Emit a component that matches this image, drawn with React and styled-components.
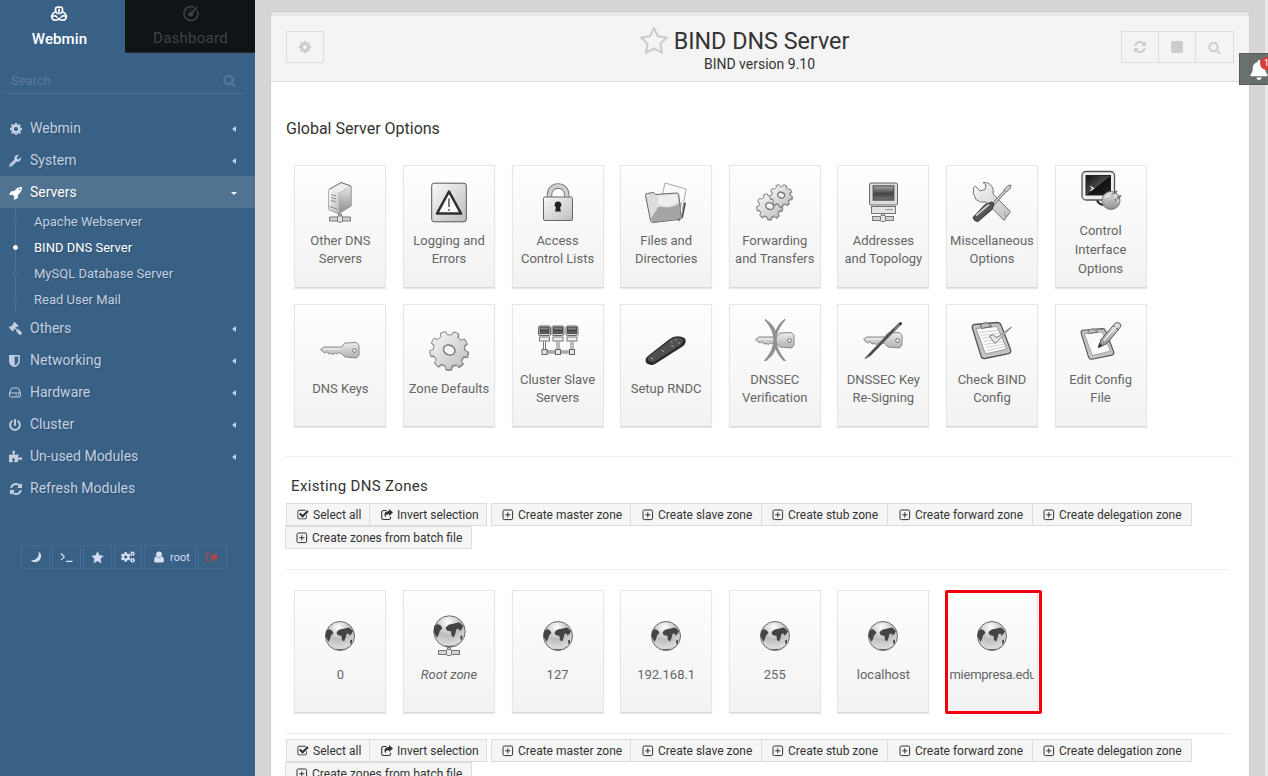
import React from 'react';
import styled, { createGlobalStyle, css } from 'styled-components';
import { FaWrench, FaGavel, FaPowerOff, FaPuzzlePiece, FaCogs, FaBell } from 'react-icons/fa';

const GlobalStyle = createGlobalStyle`
  *, *::before, *::after { box-sizing: border-box; }
  html, body { margin: 0; height: 100%; overflow: hidden; }
  body { background: #d6d6d6; font-family: Roboto, "Liberation Sans", sans-serif; font-size: 13px; color: #333; }
  svg { display: block; }
`;

/* ---------- line icons ---------- */

const Glyph = ({ size = 14, d, box = '0 0 1792 1792' }) => (
  <svg width={size} height={size} viewBox={box} fill="currentColor"><path d={d} /></svg>
);

const COG = 'M1152 896q0-106-75-181t-181-75-181 75-75 181 75 181 181 75 181-75 75-181zm512-109v222q0 12-8 23t-20 13l-185 28q-19 54-39 91 35 50 107 138 10 12 10 25t-9 23q-27 37-99 108t-94 71q-12 0-26-9l-138-108q-44 23-91 38-16 136-29 186-7 28-36 28h-222q-14 0-24.5-8.5t-11.5-21.5l-28-184q-49-16-90-37l-141 107q-10 9-25 9-14 0-25-11-126-114-165-168-7-10-7-23 0-12 8-23 15-21 51-66.5t54-70.5q-27-50-41-99l-183-27q-13-2-21-12.5t-8-23.5v-222q0-12 8-23t19-13l186-28q14-46 39-92-40-57-107-138-10-12-10-24 0-10 9-23 26-36 98.5-107.5t94.5-71.5q13 0 26 10l138 107q44-23 91-38 16-136 29-186 7-28 36-28h222q14 0 24.5 8.5t11.5 21.5l28 184q49 16 90 37l142-107q9-9 24-9 13 0 25 10 129 119 165 170 7 8 7 22 0 12-8 23-15 21-51 66.5t-54 70.5q26 50 41 98l183 28q13 2 21 12.5t8 23.5z';
const REFRESH = 'M1639 1056q0 5-1 7-64 268-268 434.5t-478 166.5q-146 0-282.5-55t-243.5-157l-129 129q-19 19-45 19t-45-19-19-45v-448q0-26 19-45t45-19h448q26 0 45 19t19 45-19 45l-137 137q71 66 161 102t187 36q134 0 250-65t186-179q11-17 53-117 8-23 30-23h192q13 0 22.5 9.5t9.5 22.5zm25-800v448q0 26-19 45t-45 19h-448q-26 0-45-19t-19-45 19-45l138-138q-148-137-349-137-134 0-250 65t-186 179q-11 17-53 117-8 23-30 23h-199q-13 0-22.5-9.5t-9.5-22.5v-7q65-268 270-434.5t480-166.5q146 0 284 55.5t245 156.5l130-129q19-19 45-19t45 19 19 45z';
const SEARCH = 'M1216 832q0-185-131.5-316.5t-316.5-131.5-316.5 131.5-131.5 316.5 131.5 316.5 316.5 131.5 316.5-131.5 131.5-316.5zm512 832q0 52-38 90t-90 38q-54 0-90-38l-343-342q-179 124-399 124-143 0-273.5-55.5t-225-150-150-225-55.5-273.5 55.5-273.5 150-225 225-150 273.5-55.5 273.5 55.5 225 150 150 225 55.5 273.5q0 220-124 399l343 343q37 37 37 90z';
const CHECK = 'M1472 930v318q0 119-84.5 203.5t-203.5 84.5h-832q-119 0-203.5-84.5t-84.5-203.5v-832q0-119 84.5-203.5t203.5-84.5h832q63 0 117 25 15 7 18 23 3 17-9 29l-49 49q-10 10-23 10-3 0-9-2-23-6-45-6h-832q-66 0-113 47t-47 113v832q0 66 47 113t113 47h832q66 0 113-47t47-113v-254q0-13 9-22l64-64q10-10 23-10 6 0 12 3 20 8 20 29zm231-489l-814 814q-24 24-57 24t-57-24l-430-430q-24-24-24-57t24-57l110-110q24-24 57-24t57 24l263 263 647-647q24-24 57-24t57 24l110 110q24 24 24 57t-24 57z';
const ROCKET = 'M1440 448q0-40-28-68t-68-28-68 28-28 68 28 68 68 28 68-28 28-68zm224-288q0 249-75.5 430.5t-253.5 360.5q-81 80-195 176l-20 379q-2 16-16 26l-384 224q-7 4-16 4-12 0-23-9l-64-64q-13-14-8-32l85-276-281-281-276 85q-3 1-9 1-14 0-23-9l-64-64q-17-19-5-39l224-384q10-14 26-16l379-20q96-114 176-195 188-187 358-258t431-71q14 0 24 9.5t10 22.5z';
const STAR = 'M12 1l3.4 7 7.6 1.1-5.5 5.3 1.3 7.6L12 18.4 5.2 22l1.3-7.6L1 9.1 8.6 8z';

const PlusBox = () => (
  <svg width="12" height="12" viewBox="0 0 12 12" fill="none" stroke="currentColor">
    <rect x="1" y="1" width="9.6" height="9.6" rx="1.4" />
    <path d="M5.8 3.2v5.2M3.2 5.8h5.2" />
  </svg>
);
const ShareBox = () => (
  <svg width="12" height="12" viewBox="0 0 12 12">
    <path d="M5.500 1.500H2.500A1.800 1.800 0 0 0 .7 3.300v5.400a1.800 1.800 0 0 0 1.800 1.800h5.200a1.800 1.800 0 0 0 1.800-1.800V7.800" fill="none" stroke="currentColor" strokeWidth="1.100" />
    <path d="M8 0l4 3.500L8 7V5.200C5.400 5.200 4.400 5.800 4.700 8.800 2.300 5.300 3.400 2 8 1.900z" fill="currentColor" />
  </svg>
);
const WebminLogo = () => (
  <svg width="18" height="16" viewBox="0 0 18 16" fill="none" stroke="#fff" strokeWidth="1.700" strokeLinecap="round" strokeLinejoin="round">
    <path d="M5.500 5.800V3.200Q5.700 1.200 7.500 1.200h3q1.800 0 2 2v2.600M9 3.400v4M5.500 5.800Q2.600 7 1.500 10.300L2.300 12.800Q3.200 14.200 5 14L7.500 13.800 9 12.300l1.500 1.500 2.500.2q1.800.2 2.700-1.200l.8-2.500Q15.400 7 12.500 5.800" />
    <path d="M6.200 5.800l1 2M11.800 5.800l-1 2M2 10.300l3.500-.6 1.500 1.500M16 10.300l-3.500-.6-1.500 1.500" strokeWidth="1.400" />
  </svg>
);
const GaugeIcon = () => (
  <svg width="18" height="17" viewBox="0 0 18 17" fill="none" stroke="currentColor">
    <path d="M12 2.200A7 7 0 1 0 15.300 5.500" strokeWidth="1.600" />
    <circle cx="8.800" cy="9.200" r="2" fill="currentColor" />
    <path d="M8.800 9.200L15 2" strokeWidth="1.900" />
    <path d="M4 9h1.200M5.200 5.500l.8.800M8.500 4v1.200" />
  </svg>
);
const HddIcon = () => (
  <svg width="12" height="11" viewBox="0 0 12 11" fill="none" stroke="currentColor">
    <path d="M.6 6L2.300 1.500Q2.500 1 3 1h6q.5 0 .7.500L11.400 6v3q0 1-1 1H1.600q-1 0-1-1V6zM.6 6h10.800M6.500 8H8M9 8h1" />
  </svg>
);
const ShieldIcon = () => (
  <svg width="11" height="12" viewBox="0 0 11 12">
    <path d="M.8.800h9.200v5.400Q10 9.500 5.400 11.400.8 9.500.8 6.200z" fill="none" stroke="currentColor" strokeWidth="1.500" />
    <path d="M.8.800h4.800v10.500Q.8 9.500.8 6.200z" fill="currentColor" />
  </svg>
);
const MoonIcon = () => (
  <svg width="12" height="12" viewBox="0 0 12 12">
    <path d="M8.700.7Q11.500 2.600 11 6t-3.800 4.800Q3.400 12 .8 9.200 5 9.800 7.300 6.800T8.700.7z" fill="currentColor" />
  </svg>
);
const UserIcon = () => (
  <svg width="10" height="12" viewBox="0 0 10 12" fill="currentColor">
    <circle cx="5" cy="3.300" r="2.900" />
    <path d="M2 5.300Q0 6.300 0 9.600 0 11.600 1.700 11.600h6.600Q10 11.600 10 9.600 10 6.300 8 5.300 5 8 2 5.300z" />
  </svg>
);
const TerminalIcon = () => (
  <svg width="13" height="11" viewBox="0 0 13 11" fill="none" stroke="currentColor" strokeWidth="1.200">
    <path d="M1 1.500l3.300 3.300L1 8.100M6 9.400h6.500" />
  </svg>
);
const SignOutIcon = () => (
  <svg width="13" height="11" viewBox="0 0 13 11">
    <path d="M5 1H3Q1 1 1 3v4.500q0 2 2 2h2" fill="none" stroke="currentColor" strokeWidth="1.200" />
    <path d="M4 3.300h3.700V.5L12.700 5.200 7.700 9.900V7.100H4z" fill="currentColor" />
  </svg>
);
const StarIcon = ({ size, outline }) => (
  <svg width={size} height={size} viewBox="0 0 24 24">
    <path d={STAR} fill={outline ? 'none' : 'currentColor'} stroke="currentColor" strokeWidth={outline ? 1.8 : 0.5} />
  </svg>
);

/* ---------- pictograms for the tiles, 48 x 48 ---------- */

const HiddenSvg = styled.svg`position: absolute;`;
const Defs = () => (
  <HiddenSvg width="0" height="0">
    <defs>
      <linearGradient id="light" x1="0" y1="0" x2="1" y2="1"><stop offset="0" stopColor="#fafafa" /><stop offset="1" stopColor="#bcbcbc" /></linearGradient>
      <linearGradient id="mid" x1="0" y1="0" x2="0" y2="1"><stop offset="0" stopColor="#e6e6e6" /><stop offset="1" stopColor="#8c8c8c" /></linearGradient>
      <linearGradient id="pale" x1="0" y1="0" x2="0" y2="1"><stop offset="0" stopColor="#eee" /><stop offset="1" stopColor="#b0b0b0" /></linearGradient>
      <linearGradient id="dark" x1="0" y1="0" x2="0" y2="1"><stop offset="0" stopColor="#aaa" /><stop offset=".55" stopColor="#444" /><stop offset="1" stopColor="#777" /></linearGradient>
      <linearGradient id="night" x1="0" y1="0" x2="1" y2="1"><stop offset="0" stopColor="#111" /><stop offset=".5" stopColor="#4a4a4a" /><stop offset=".52" stopColor="#111" /><stop offset="1" stopColor="#222" /></linearGradient>
      <radialGradient id="ball" cx=".45" cy=".2" r=".85"><stop offset="0" stopColor="#fff" /><stop offset=".5" stopColor="#bdbdbd" /><stop offset=".85" stopColor="#dcdcdc" /><stop offset="1" stopColor="#888" /></radialGradient>
    </defs>
  </HiddenSvg>
);

const Net = ({ y }) => (
  <g fill="#d2d2d2" stroke="#777" strokeWidth="1">
    <path d={`M22.500 ${y - 3}h3v3h-3z`} />
    <rect x="13.500" y={y} width="21" height="4" />
    <rect x="21.500" y={y - 1} width="5" height="6" rx="1" fill="#e6e6e6" />
  </g>
);
const gearPath = (cx, cy, R, r, n) => {
  const pts = [];
  for (let i = 0; i < n; i += 1) {
    [[-0.3, r], [-0.2, R], [0.2, R], [0.3, r]].forEach(([o, rad]) => {
      const a = ((i + o) / n) * Math.PI * 2 + 0.2;
      pts.push(`${(cx + rad * Math.cos(a)).toFixed(2)} ${(cy + rad * Math.sin(a)).toFixed(2)}`);
    });
  }
  return `M${pts.join('L')}Z`;
};
const Gear = ({ cx, cy, R, n = 9 }) => (
  <g stroke="#888" strokeWidth="1" strokeLinejoin="round">
    <path d={gearPath(cx + 0.4, cy + 0.7, R, R * 0.82, n)} fill="#888" />
    <path d={gearPath(cx, cy, R, R * 0.82, n)} fill="url(#light)" />
    <ellipse cx={cx} cy={cy - 0.5} rx={R * 0.31} ry={R * 0.25} transform={`rotate(25 ${cx} ${cy})`} fill="#f7f7f7" stroke="#777" strokeWidth="1.400" />
  </g>
);
const Key = ({ y = 25 }) => (
  <g transform={`translate(0 ${y - 25})`} stroke="#888" strokeLinejoin="round">
    <path d="M4.500 24L8 21.500h17.500l3.500-4L40.500 17l2.500 3v9.500l-2.500 3L29 31.500l-3.500-3.500-2.500-1-1.500 1.500-2-1-2 1.500-2.500-1-2 .5-2-2.500-1.500 1.500-2-1z" fill="url(#pale)" />
    <path d="M7 23.500h18" stroke="#f5f5f5" />
    <circle cx="38.500" cy="25" r="1.800" fill="#fff" stroke="#666" />
  </g>
);
const Monitor = ({ x, y, w, h }) => (
  <g>
    <rect x={x} y={y} width={w} height={h} rx="1.500" fill="#ddd" stroke="#666" />
    <rect x={x + w * 0.13} y={y + h * 0.13} width={w * 0.74} height={h * 0.65} fill="url(#dark)" stroke="#444" />
  </g>
);
const Board = ({ check }) => (
  <g strokeLinejoin="round">
    <path d="M4.500 12q-1-3 1.500-4l23-2q3 0 4 2.500L42.500 33q1 3-2 4.200L17 42q-3 .5-4-2.500z" fill="#c4c4c4" stroke="#555" strokeWidth="1.300" />
    <path d="M8 12l21-2 10 22.500-21.500 5z" fill="#fbfbfb" stroke="#999" />
    {check && <path d="M11.500 16l18-2M12.500 19l18-2M14 22l18-2.500M15.500 25l17.500-3M16.500 28l18-3M18 31l18-3.500M19 34l18-4" stroke="#bbb" strokeWidth=".7" />}
    <path d="M12.500 10.500Q12 7.500 16 6.500q5-1 6 2l2 1.500-10.500 2z" fill="#bbb" stroke="#666" />
  </g>
);
const Land = () => (
  <g fill="#444">
    <path d="M10 20l3-2.500 3 1.500 1.500 2.500-2.500 2.500-1 3.500-1.500 3-1.500-3-1.500-3z" />
    <path d="M20.500 21q2-3.500 6-3.500l6.500-1.500 4 3.500-1.500 3-2 1.500-1-2-2 .5-1 4-1.500 3.500-2-1.500-.5-4-4-1z" />
    <path d="M34 29l2-1v3l-1.500 2zM20 37.500q4 .8 8 0l-2 1h-4z" />
  </g>
);

const PICTURES = {
  server: (
    <g strokeLinejoin="round">
      <path d="M13 12L25 5l10 3.500v20L22.500 36 13 32z" fill="#ededed" stroke="#666" />
      <path d="M13 12l10 3.500V36l-10-4z" fill="url(#light)" />
      <path d="M23 15.500L35 8.500v20L23 36z" fill="url(#mid)" stroke="#aaa" strokeWidth=".6" />
      <path d="M15 17l5 1.500M15 20l5 1.500M15 23l5 1.500M14 29l8 3" stroke="#888" />
      <Net y={39.5} />
    </g>
  ),
  warning: (
    <g>
      <rect x="6.700" y="5.700" width="34.600" height="38.600" rx="2.500" fill="url(#light)" stroke="#555" />
      <path d="M24 14L36 36H12z" fill="#fbfbfb" stroke="#303030" strokeWidth="2.600" strokeLinejoin="round" />
      <path d="M24 21v8.500M24 31.500v1.800" stroke="#333" strokeWidth="1.300" />
    </g>
  ),
  lock: (
    <g>
      <path d="M15.500 20v-3a8.600 8.600 0 0 1 17.200 0V20" fill="none" stroke="#777" strokeWidth="5.500" />
      <path d="M15.500 20v-3a8.600 8.600 0 0 1 17.200 0V20" fill="none" stroke="#cfcfcf" strokeWidth="3.700" />
      <rect x="9.500" y="19.500" width="29" height="23.500" rx="1.500" fill="url(#light)" stroke="#666" />
      <path d="M10.500 25h27M10.500 29h27M10.500 33h27M10.500 37h27" stroke="#ddd" opacity=".5" />
      <path d="M24 24a3.300 3.300 0 0 1 2 6l1 4h-6l1-4a3.300 3.300 0 0 1 2-6z" fill="#222" />
    </g>
  ),
  folder: (
    <g strokeLinejoin="round">
      <path d="M40 26l4-1-3 15-5 4z" fill="#444" />
      <path d="M23 5.500l21 6-5 30-23-5z" fill="#fafafa" stroke="#aaa" />
      <path d="M3.500 18q0-2 2-2l6-1 2 2 21-1.500q2 0 2.300 2L39 39l-2 3-26 3q-2 0-2.500-2z" fill="#dcdcdc" stroke="#666" />
      <path d="M9 41l9-14q9 7 22-3l-2 17-27 4z" fill="#8d8d8d" opacity=".7" />
      <path d="M16 18l19-1 1 7q-9 7-20 5z" fill="#f4f4f4" opacity=".7" />
    </g>
  ),
  gears: <g><Gear cx={18.5} cy={29} R={13} /><Gear cx={30} cy={18} R={11.2} /></g>,
  computer: (
    <g>
      <Monitor x={10.5} y={5.5} w={28} h={22} />
      <rect x="12.500" y="29" width="24" height="7" fill="#e4e4e4" stroke="#777" />
      <path d="M26 32h8" stroke="#999" />
      <Net y={39} />
    </g>
  ),
  tools: (
    <g strokeLinejoin="round">
      <path d="M5.500 10l2-1.500L12 13.500l5-1.500 1-4.500-3-2.500q6-.5 9 4 2 3 1 7.500L42.500 34 36 43 18 24.500q-6 1.500-10-2.500Q4 16 5.500 10z" fill="url(#light)" stroke="#777" />
      <path d="M37 35v4" stroke="#999" />
      <path d="M24 28l15-16.500" stroke="#666" strokeWidth="3" />
      <path d="M24 28l15-16.500" stroke="#ddd" strokeWidth="1.200" />
      <path d="M36 12l4-4 3-.5-.5 3-4 4z" fill="#ccc" stroke="#777" />
      <path d="M5 40l12-13 7-2.500 2 2-2 5.500L10 44q-4 0-5-4z" fill="#555" stroke="#333" />
      <path d="M8 38l13-11" stroke="#ccc" strokeWidth="1.800" />
    </g>
  ),
  console: (
    <g>
      <rect x="5" y="5" width="32.500" height="28.500" rx="4" fill="#eee" stroke="#555" strokeWidth="1.300" />
      <rect x="9" y="9" width="24.500" height="19.500" fill="url(#night)" stroke="#222" />
      <path d="M13.500 20l3 2-3 2" fill="none" stroke="#eee" strokeWidth="1.300" />
      <path d="M20 34q3 6 12 4" fill="none" stroke="#222" strokeWidth="2" />
      <circle cx="34" cy="34" r="9" fill="url(#mid)" stroke="#777" />
      <path d="M34 29.500l6-5M38 34l6-5" stroke="#777" strokeWidth="2.200" />
      <path d="M27 31l10-3 5 8" fill="none" stroke="#eee" />
    </g>
  ),
  key: <Key />,
  gear: <Gear cx={24} cy={25} R={19.3} />,
  cluster: (
    <g>
      {[4.5, 18, 32].map((x) => (
        <g key={x}>
          <Monitor x={x} y={9.5} w={12} h={9.5} />
          <rect x={x + 1} y="20.500" width="10" height="4" fill="#eee" stroke="#777" />
          <path d={`M${x + 6} 25v9`} stroke="#777" strokeWidth="3" />
          <path d={`M${x + 6} 25v9`} stroke="#fff" />
        </g>
      ))}
      <path d="M10 35.500h28" stroke="#777" strokeWidth="3" /><path d="M10 35.500h28" stroke="#ddd" />
      {[8, 21.5, 35.5].map((x) => <rect key={x} x={x} y="33" width="5" height="5" fill="#e6e6e6" stroke="#666" />)}
    </g>
  ),
  remote: (
    <g>
      <path d="M3.500 35q0-3 3-5L27 14q5-4 11-3 7 1 5.500 6-.5 2-3 4L13 38.500q-3 2-7 0-2.500-1-2.500-3.500z" fill="#2b2b2b" />
      <path d="M5.500 33.500q0-2 3-4l20-15q5-3.500 10-2 4 1.500 2 4.500l-3 3-24 15.500q-3 2-6.500 0z" fill="#505050" />
      <path d="M29 16l1.500 1M33 14l1.500 1M36.500 17l1.500 1M29 20l3 1M20 25l2 1M9 32.500l2 1" stroke="#999" strokeWidth="1.200" />
    </g>
  ),
  verify: (
    <g>
      <Key y={24} />
      <path d="M14 3q18 20 0 41h1q9-7 9.500-14Q26 37 33 44h1q-18-21 0-41-7 5-9.500 13Q23 9 14 3z" fill="#929292" stroke="#909090" strokeWidth="1.200" />
    </g>
  ),
  resign: (
    <g>
      <Key y={24} />
      <path d="M8 39.500L39 7.500q3-1.500 2.500 1L11 39.500 6 42z" fill="#777" stroke="#555" strokeWidth=".8" />
      <path d="M10 39L35 12.500" stroke="#444" strokeWidth="1.600" /><circle cx="41.500" cy="7" r="1.500" fill="#333" />
    </g>
  ),
  check: (
    <g>
      <Board check />
      <path d="M21.500 19.500l3.500-1.500 3.500 3.500L43.500 10.500 27 27z" fill="#e8e8e8" stroke="#777" />
    </g>
  ),
  edit: (
    <g>
      <g transform="translate(.5 7) scale(.85)"><Board /></g>
      <path d="M21.500 31l2.500-8L38 7q2-2 5 0 2 2 0 4L30 27z" fill="url(#mid)" stroke="#555" />
      <path d="M21.500 31l1-4 2.500 2zM36 9l5 4" fill="#222" stroke="#444" />
      <path d="M27 24L39 10" stroke="#eee" strokeWidth="1.200" />
    </g>
  ),
  globe: <g><circle cx="24" cy="24.500" r="14.500" fill="url(#ball)" stroke="#6a6a6a" /><Land /></g>,
  globeNet: (
    <g>
      <Net y={39} />
      <circle cx="24.500" cy="20" r="15.700" fill="url(#ball)" stroke="#6a6a6a" />
      <g transform="translate(-1.500 -6.500) scale(1.080)"><Land /></g>
    </g>
  ),
};
const Picture = ({ name }) => <svg width="48" height="48" viewBox="0 .5 48 48" fill="none">{PICTURES[name]}</svg>;

/* ---------- sidebar ---------- */

const Page = styled.div`display: flex; height: 776px; width: 1268px; overflow: hidden;`;
const Sidebar = styled.aside`width: 255px; flex: none; background: #396186; color: #c3cfe0;`;
const Tabs = styled.div`display: flex; height: 53px;`;
const Tab = styled.div`
  display: flex; flex-direction: column; align-items: center;
  width: ${(p) => (p.$active ? 125 : 130)}px; padding-top: 6px; gap: 8px;
  font-size: 15px; line-height: 18px; font-weight: ${(p) => (p.$active ? 500 : 400)};
  letter-spacing: ${(p) => (p.$active ? 0.1 : 0.25)}px;
  color: ${(p) => (p.$active ? '#fff' : '#3f4344')};
  background: ${(p) => (p.$active ? 'transparent' : '#0f1416')};
  ${(p) => !p.$active && css`border-bottom: 1px solid #2a2a2a; padding-top: 5px; gap: 7px;`}
  & > span { margin-left: ${(p) => (p.$active ? -6 : 1)}px; }
  & > svg { margin-left: ${(p) => (p.$active ? -7 : 2)}px; }
`;
const Search = styled.div`
  display: flex; align-items: center; justify-content: space-between;
  width: 240px; height: 27px; margin: 14px 0 18px 5px; padding: 0 9px 0 6px;
  border-bottom: 1px solid #49729a; color: #5a7ba0; font-size: 13px;
`;
const MenuItem = styled.div`
  display: flex; align-items: center; height: 32px; padding: 0 18px 0 9px; font-size: 14px;
  text-shadow: 1px 1px 1px rgba(0, 0, 0, .2);
  color: ${(p) => (p.$open ? '#fff' : '#c3cfe0')};
  background: ${(p) => (p.$open ? '#4f7391' : 'transparent')};
`;
const MenuIcon = styled.span`
  width: 21px; display: flex; padding-top: 1px;
  ${(p) => p.$flip && css`& > svg { transform: scaleX(-1); }`}
`;
const MenuLabel = styled.span`flex: 1;`;
const Caret = styled.i`
  border: 3.5px solid transparent; margin-top: 2px;
  ${(p) => (p.$open
    ? css`border-top-color: #fff; border-bottom: 0;`
    : css`border-right: 4px solid currentColor; border-left: 0; margin-right: 1px;`)}
`;
const SubMenu = styled.div`margin-left: 15px; border-left: 1px solid #4f7391;`;
const SubItem = styled.div`
  display: flex; align-items: center; gap: 16px; height: 26px; font-size: 13px; margin-left: -3px;
  color: ${(p) => (p.$active ? '#fff' : '#c3cfe0')};
  text-shadow: 1px 1px 1px rgba(0, 0, 0, .2);
  &::before {
    content: ''; width: 5px; height: 5px; border-radius: 50%; margin-top: 1px;
    border: 1px solid ${(p) => (p.$active ? '#fff' : '#4f7391')};
    background: ${(p) => (p.$active ? '#fff' : '#396186')};
  }
`;
const Tools = styled.div`display: flex; gap: 2px; margin: 41px 0 0 21px;`;
const ToolButton = styled.div`
  display: flex; align-items: center; justify-content: center; gap: 6px;
  width: ${(p) => p.$width || 29}px; height: 24px; border: 1px solid #426d97; padding-left: ${(p) => p.$shift || 0}px;
  font-size: 11px; color: ${(p) => (p.$danger ? '#a94a4a' : '#d4def0')};
`;

/* ---------- content ---------- */

const Main = styled.main`width: 978px; flex: none; margin: 12px 0 0 16px; background: #fff; border-top: 4px solid #e6e6e6; box-shadow: 0 0 1px #aaa;`;
const Header = styled.header`
  display: flex; justify-content: space-between; height: 66px; padding: 15px;
  background: #f4f4f4; border-bottom: 1px solid #ddd;
`;
const HeaderGroup = styled.div`display: flex; width: 113px; height: 32px; justify-content: ${(p) => (p.$end ? 'flex-end' : 'flex-start')};`;
const HeaderButton = styled.div`
  display: flex; align-items: center; justify-content: center; width: 38px; height: 32px; flex: none;
  border: 1px solid #ddd; color: #ccc;
  & + & { margin-left: -1px; }
  & + &:last-child { width: 39px; }
`;
const StopSquare = styled.span`width: 12px; height: 12px; border-radius: 2px; background: #ccc;`;
const Heading = styled.div`display: flex; flex-direction: column; align-items: center; margin: -4px 1px 0 0; line-height: 16px; font-size: 14px;`;
const Title = styled.h1`
  display: flex; align-items: center; gap: 6px; margin: 0 0 1px -30px; font-weight: 400; font-size: 23.3px; line-height: 28px; color: #333;
  & > svg { color: #ccc; }
`;
const Body = styled.div`padding: 0 15px;`;
const SectionTitle = styled.h2`
  margin: 0; font-weight: 400; line-height: 20px; color: #333;
  ${(p) => (p.$sub
    ? css`font-size: 15px; letter-spacing: .35px; padding: 19px 0 7px 5px;`
    : css`font-size: 16px; padding: 37px 0 26px;`)}
`;
const Tiles = styled.div`
  display: grid; grid-template-columns: repeat(8, 108.6px); row-gap: 16px; padding-left: 8.4px;
`;
const Tile = styled.div`
  display: flex; flex-direction: column; align-items: center; justify-content: center; gap: 6px;
  width: 92px; height: 123px; padding-bottom: 8px; position: relative;
  border: 1px solid #e6e6e6; border-bottom-color: #d9d9d9; box-shadow: 0 1px 1px #e8e8e8;
  background: linear-gradient(#fefefe, #f2f2f2);
  ${(p) => p.$marked && css`
    &::after { content: ''; position: absolute; left: -2px; top: -1px; width: 97px; height: 124px; border: 3px solid #f2000c; border-radius: 2px; }
  `}
`;
const TileLabel = styled.div`
  width: ${(p) => (p.$clipped ? 85 : 90)}px; color: #666; font-size: 13px; line-height: ${(p) => (p.$tall ? 19 : 18)}px;
  font-style: ${(p) => (p.$italic ? 'italic' : 'normal')}; white-space: pre; overflow: hidden;
  text-align: ${(p) => (p.$clipped ? 'left' : 'center')};
  letter-spacing: ${(p) => (p.$clipped ? -0.25 : 0)}px;
`;
const Rule = styled.hr`border: 0; border-top: 1px solid #eee; height: 0; margin: ${(p) => p.$margin}; width: ${(p) => p.$width || 948}px;`;
const ActionRow = styled.div`display: flex; height: 23px;`;
const Action = styled.div`
  display: flex; align-items: center; gap: 4px; flex: none; width: ${(p) => p.$width}px; height: 23px; padding-left: ${(p) => p.$pad || 10}px;
  margin-left: ${(p) => p.$offset || 0}px; border: 1px solid #ddd; background: #f5f5f5; color: #333; font-size: 12px; white-space: nowrap;
`;
const Bell = styled.div`
  position: absolute; left: 1239px; top: 53px; width: 40px; height: 32px; padding: 6px 0 0 9px;
  background: rgba(88, 94, 94, .88); border: 1px solid #5a5a5a; color: #fff;
`;
const Badge = styled.span`
  position: absolute; left: 20px; top: 3px; width: 13px; height: 13px; border-radius: 50%;
  background: #d9403c; color: #fff; font-size: 9px; line-height: 13px; padding-left: 4px;
`;
const Clip = styled.div`position: relative; width: 1268px; height: 776px; overflow: hidden;`;
const Edge = styled.div`width: 3px; margin-left: auto; background: #e8e8e8;`;

const MENU = [
  ['Webmin', <Glyph d={COG} size={14} />],
  ['System', <FaWrench size={12} />],
  ['Servers', <Glyph d={ROCKET} size={14} />, ['Apache Webserver', 'BIND DNS Server', 'MySQL Database Server', 'Read User Mail']],
  ['Others', <FaGavel size={13} />],
  ['Networking', <ShieldIcon />],
  ['Hardware', <HddIcon />],
  ['Cluster', <FaPowerOff size={12} />],
  ['Un-used Modules', <FaPuzzlePiece size={13} />],
  ['Refresh Modules', <Glyph d={REFRESH} size={14} />],
];
const OPTIONS = [
  ['server', 'Other DNS\nServers'], ['warning', 'Logging and\nErrors'], ['lock', 'Access\nControl Lists'],
  ['folder', 'Files and\nDirectories'], ['gears', 'Forwarding\nand Transfers'], ['computer', 'Addresses\nand Topology'],
  ['tools', 'Miscellaneous\nOptions'], ['console', 'Control\nInterface\nOptions'],
  ['key', 'DNS Keys'], ['gear', 'Zone Defaults'], ['cluster', 'Cluster Slave\nServers'], ['remote', 'Setup RNDC'],
  ['verify', 'DNSSEC\nVerification'], ['resign', 'DNSSEC Key\nRe-Signing'], ['check', 'Check BIND\nConfig'], ['edit', 'Edit Config\nFile'],
];
const ZONES = ['0', 'Root zone', '127', '192.168.1', '255', 'localhost', 'miempresa.edu'];

const Actions = () => (
  <>
    <ActionRow>
      <Action $width={84}><Glyph d={CHECK} size={12} />Select all</Action>
      <Action $width={118} $offset={-1} $pad={11}><ShareBox />Invert selection</Action>
      <Action $width={140} $offset={4}><PlusBox />Create master zone</Action>
      <Action $width={132} $offset={-1} $pad={11}><PlusBox />Create slave zone</Action>
      <Action $width={127} $offset={-1}><PlusBox />Create stub zone</Action>
      <Action $width={146} $offset={-1} $pad={11}><PlusBox />Create forward zone</Action>
      <Action $width={160} $offset={-1}><PlusBox />Create delegation zone</Action>
    </ActionRow>
    <ActionRow>
      <Action $width={187} $offset={-1}><PlusBox />Create zones from batch file</Action>
    </ActionRow>
  </>
);

export default function App() {
  return (
    <Clip>
      <GlobalStyle />
      <Defs />
      <Page>
        <Sidebar>
          <Tabs>
            <Tab $active><WebminLogo /><span>Webmin</span></Tab>
            <Tab><GaugeIcon /><span>Dashboard</span></Tab>
          </Tabs>
          <Search><span>Search</span><Glyph d={SEARCH} size={13} /></Search>
          {MENU.map(([label, icon, children]) => (
            <React.Fragment key={label}>
              <MenuItem $open={!!children}>
                <MenuIcon $flip={label === 'Others'}>{icon}</MenuIcon>
                <MenuLabel>{label}</MenuLabel>
                {label !== 'Refresh Modules' && <Caret $open={!!children} />}
              </MenuItem>
              {children && (
                <SubMenu>
                  {children.map((c) => <SubItem key={c} $active={c === 'BIND DNS Server'}>{c}</SubItem>)}
                </SubMenu>
              )}
            </React.Fragment>
          ))}
          <Tools>
            <ToolButton><MoonIcon /></ToolButton>
            <ToolButton><TerminalIcon /></ToolButton>
            <ToolButton><StarIcon size={13} /></ToolButton>
            <ToolButton $width={28}><FaCogs size={14} /></ToolButton>
            <ToolButton $width={52} $shift={4}><UserIcon />root</ToolButton>
            <ToolButton $danger><SignOutIcon /></ToolButton>
          </Tools>
        </Sidebar>
        <Main>
          <Header>
            <HeaderGroup><HeaderButton><Glyph d={COG} /></HeaderButton></HeaderGroup>
            <Heading>
              <Title><StarIcon size={28} outline />BIND DNS Server</Title>
              BIND version 9.10
            </Heading>
            <HeaderGroup $end>
              <HeaderButton><Glyph d={REFRESH} /></HeaderButton>
              <HeaderButton><StopSquare /></HeaderButton>
              <HeaderButton><Glyph d={SEARCH} size={13} /></HeaderButton>
            </HeaderGroup>
          </Header>
          <Body>
            <SectionTitle>Global Server Options</SectionTitle>
            <Tiles>
              {OPTIONS.map(([icon, label]) => (
                <Tile key={label}>
                  <Picture name={icon} />
                  <TileLabel $tall={icon === 'console'}>{label}</TileLabel>
                </Tile>
              ))}
            </Tiles>
            <Rule $margin="29px 0 0" />
            <SectionTitle $sub>Existing DNS Zones</SectionTitle>
            <Actions />
            <Rule $margin="20px 0 20px" $width={943} />
            <Tiles>
              {ZONES.map((zone) => (
                <Tile key={zone} $marked={zone === 'miempresa.edu'}>
                  <Picture name={zone === 'Root zone' ? 'globeNet' : 'globe'} />
                  <TileLabel $italic={zone === 'Root zone'} $clipped={zone === 'miempresa.edu'}>{zone}</TileLabel>
                </Tile>
              ))}
            </Tiles>
            <Rule $margin="20px 0 5px" $width={943} />
            <Actions />
          </Body>
        </Main>
        <Edge />
      </Page>
      <Bell><FaBell size={20} /><Badge>1</Badge></Bell>
    </Clip>
  );
}
